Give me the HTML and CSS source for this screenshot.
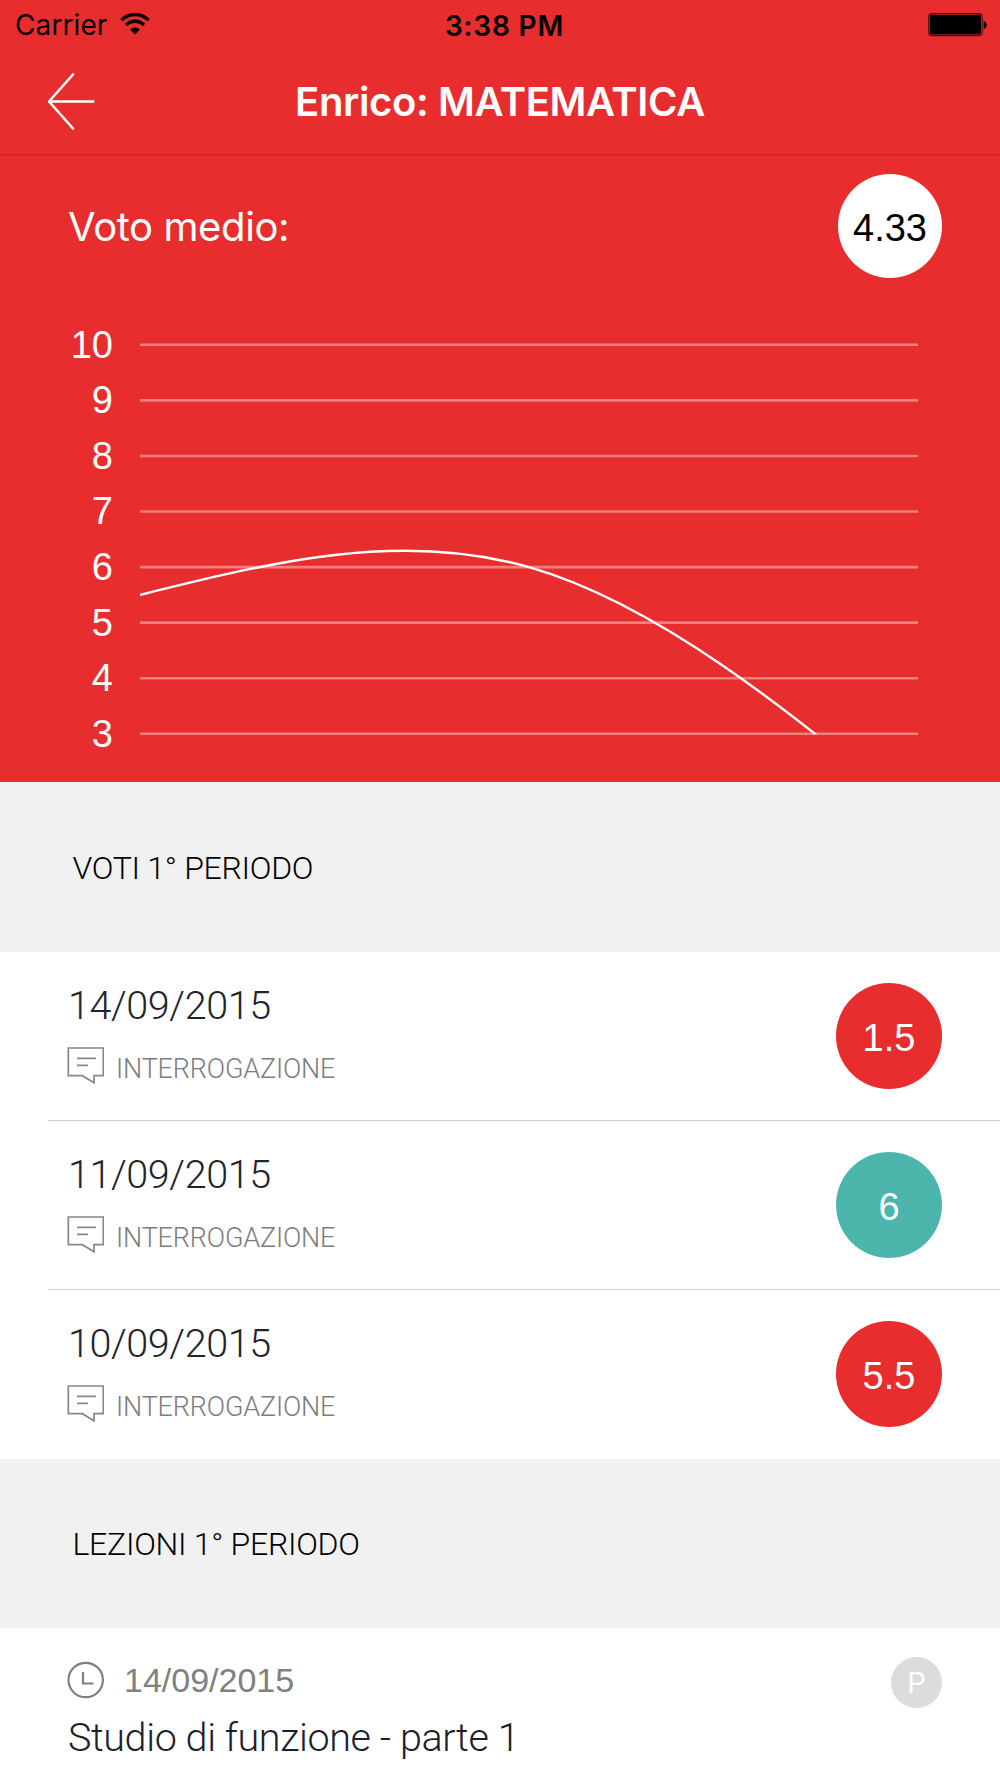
FILE: index.html
```html
<!DOCTYPE html>
<html lang="it">
<head>
  <meta charset="UTF-8">
  <meta name="viewport" content="width=device-width, initial-scale=1.0">
  <title>Enrico: MATEMATICA</title>
  <link rel="stylesheet" href="styles.css">
</head>
<body>
  <header class="header">
    <div class="status">
      <div class="carrier">
        <span>Carrier</span>
        <svg class="wifi" width="30" height="22" viewBox="0 0 30 22">
          <path d="M1.3 7.2a19.4 19.4 0 0 1 27.4 0M6 12a12.7 12.7 0 0 1 18 0" fill="none" stroke="#000" stroke-width="3.3"/>
          <path d="M15 21.5l-4.9-5a7 7 0 0 1 9.8 0z"/>
        </svg>
      </div>
      <span class="time">3:38 PM</span>
      <svg class="battery" width="60" height="24" viewBox="0 0 60 24">
        <rect x="0.7" y="0.7" width="53.5" height="22" rx="3.5" fill="none" stroke="#000" stroke-opacity="0.65" stroke-width="1.2"/>
        <rect x="1.8" y="1.8" width="51.2" height="19.8" rx="2.2"/>
        <path d="M55.6 8c4 1 4 7 0 8z"/>
      </svg>
    </div>
    <div class="navbar">
      <svg class="back" width="50" height="60" viewBox="0 0 50 60">
        <path d="M27 3.5L3 30.5L27 57.5M3 30.5H47.3" fill="none" stroke="#fff" stroke-width="2.6" stroke-linecap="round" stroke-linejoin="round"/>
      </svg>
      <h1 class="title">Enrico: MATEMATICA</h1>
    </div>
  </header>

  <section class="summary">
    <div class="average">
      <span class="average-label">Voto medio:</span>
      <span class="badge badge-average">4.33</span>
    </div>
    <div class="chart">
      <div class="axis">
        <span>10</span><span>9</span><span>8</span><span>7</span><span>6</span><span>5</span><span>4</span><span>3</span>
      </div>
      <svg class="plot" width="778" height="445" viewBox="0 -27.8 778 445">
        <clipPath id="area"><rect x="0" y="-28" width="778" height="417.4"/></clipPath>
        <path class="grid" d="M0 0H778M0 55.57H778M0 111.14H778M0 166.71H778M0 222.29H778M0 277.86H778M0 333.43H778M0 389H778"/>
        <path class="line" clip-path="url(#area)" d="M0 250.1C129.7 217.7 259.3 185.3 389 222.3S648.3 365.9 778 472.4"/>
      </svg>
    </div>
  </section>

  <h2 class="section-title">VOTI 1° PERIODO</h2>
  <ul class="list">
    <li class="row">
      <div class="info">
        <div class="date">14/09/2015</div>
        <div class="kind">
          <svg class="note" width="37" height="37" viewBox="0 0 37 37">
            <path d="M1.3 1H36.3V28.7H27V35.8L15.3 28.7H1.3zM10 11.3H29M10 18.4H21"/>
          </svg>
          <span>INTERROGAZIONE</span>
        </div>
      </div>
      <span class="badge bad">1.5</span>
    </li>
    <li class="row">
      <div class="info">
        <div class="date">11/09/2015</div>
        <div class="kind">
          <svg class="note" width="37" height="37" viewBox="0 0 37 37">
            <path d="M1.3 1H36.3V28.7H27V35.8L15.3 28.7H1.3zM10 11.3H29M10 18.4H21"/>
          </svg>
          <span>INTERROGAZIONE</span>
        </div>
      </div>
      <span class="badge good">6</span>
    </li>
    <li class="row">
      <div class="info">
        <div class="date">10/09/2015</div>
        <div class="kind">
          <svg class="note" width="37" height="37" viewBox="0 0 37 37">
            <path d="M1.3 1H36.3V28.7H27V35.8L15.3 28.7H1.3zM10 11.3H29M10 18.4H21"/>
          </svg>
          <span>INTERROGAZIONE</span>
        </div>
      </div>
      <span class="badge bad">5.5</span>
    </li>
  </ul>

  <h2 class="section-title section-lessons">LEZIONI 1° PERIODO</h2>
  <div class="lesson">
    <div class="lesson-head">
      <svg class="clock" width="38" height="38" viewBox="0 0 38 38">
        <circle cx="18.7" cy="19" r="17.2"/>
        <path d="M16 11V22.5H26.5"/>
      </svg>
      <span class="lesson-date">14/09/2015</span>
      <span class="presence">P</span>
    </div>
    <div class="lesson-title">Studio di funzione - parte 1</div>
  </div>
</body>
</html>
```
FILE: styles.css
```css
* {
  box-sizing: border-box;
}

body {
  margin: 0;
  height: 1778px;
  overflow: hidden;
  background: #fff;
  font-family: Roboto, sans-serif;
  font-weight: 300;
}

h1, h2, ul {
  margin: 0;
  padding: 0;
}

/* Status bar and navigation */
.header {
  height: 156px;
  background: #e72d2d;
  border-bottom: 2px solid #cf292a;
  font-family: Inter, sans-serif;
}

.status {
  display: grid;
  grid-template-columns: 1fr auto 1fr;
  align-items: center;
  height: 50px;
  padding: 0 12px 0 15px;
  font-size: 28px;
  font-weight: 400;
  line-height: 34px;
  color: #000;
}

.carrier {
  display: flex;
  align-items: center;
  gap: 13px;
  letter-spacing: 0.1px;
}

.wifi {
  margin-bottom: 2px;
}

.time {
  padding: 1px 0 0 6px;
  font-weight: 600;
  letter-spacing: 0.8px;
}

.battery {
  justify-self: end;
}

.navbar {
  display: grid;
  grid-template-columns: 140px 1fr 140px;
  align-items: center;
  height: 104px;
}

.back {
  margin-left: 46px;
  margin-bottom: 3px;
}

.title {
  font-size: 40px;
  font-weight: 600;
  line-height: 104px;
  letter-spacing: -0.38px;
  text-align: center;
  color: #fff;
}

/* Average and chart */
.summary {
  height: 626px;
  padding-top: 18px;
  background: #e72d2d;
  color: #fff;
}

.average {
  display: flex;
  justify-content: space-between;
  align-items: center;
  padding: 0 58px 0 68px;
}

.average-label {
  font-family: Inter, sans-serif;
  font-size: 40px;
  font-weight: 400;
  letter-spacing: -0.4px;
}

.badge {
  width: 106px;
  height: 106px;
  border-radius: 50%;
  font: 400 38px/110px "Liberation Sans", sans-serif;
  text-align: center;
  color: #fff;
}

.badge-average {
  width: 104px;
  height: 104px;
  line-height: 108px;
  background: #fff;
  color: #000;
}

.chart {
  display: flex;
  gap: 27px;
  margin-top: 38.7px;
}

.axis {
  display: flex;
  flex-direction: column;
  width: 113px;
  padding-top: 1px;
  font: 400 38px/55.57px "Liberation Sans", sans-serif;
  text-align: right;
}

.grid {
  stroke: #fff;
  stroke-opacity: 0.4;
  stroke-width: 2.6;
}

.line {
  fill: none;
  stroke: #fff;
  stroke-width: 2.4;
}

/* Section titles */
.section-title {
  height: 170px;
  padding-left: 72.5px;
  background: #f1f1f1;
  font-size: 32px;
  font-weight: 300;
  line-height: 172px;
  letter-spacing: -0.28px;
  color: #000;
}

.section-lessons {
  height: 169px;
  line-height: 171px;
}

/* Grades */
.list {
  list-style: none;
}

.row {
  display: flex;
  justify-content: space-between;
  height: 169px;
  margin-left: 48px;
  padding: 31px 58px 0 19px;
  border-bottom: 1px solid #cfcfcf;
}

.row:last-child {
  border-bottom: none;
}

.date {
  height: 64px;
  padding-left: 1px;
  font-size: 39.5px;
  line-height: 45px;
  letter-spacing: -0.4px;
  color: #212529;
}

.kind {
  display: flex;
  gap: 12px;
  font-size: 27px;
  line-height: 45px;
  letter-spacing: -0.17px;
  color: #7d7d7d;
}

.note {
  fill: none;
  stroke: #888;
  stroke-width: 1.7;
}

.bad {
  background: #e72d2d;
}

.good {
  background: #4db6ac;
}

/* Lessons */
.lesson {
  padding: 29px 58px 0 67px;
}

.lesson-head {
  display: flex;
  align-items: center;
  height: 51px;
}

.clock {
  margin-bottom: 6px;
  fill: none;
  stroke: #808080;
  stroke-width: 2.2;
}

.lesson-date {
  margin: 0 0 5px 19px;
  font: 400 34px/46px "Liberation Sans", sans-serif;
  color: #808080;
}

.presence {
  width: 51px;
  height: 51px;
  margin-left: auto;
  border-radius: 50%;
  background: #dcdcdc;
  font-size: 29px;
  font-weight: 400;
  line-height: 52px;
  text-align: center;
  color: #fff;
}

.lesson-title {
  margin-top: 6px;
  padding-left: 1px;
  font-size: 39.5px;
  line-height: 47px;
  letter-spacing: -0.4px;
  color: #1f1f2b;
}
```
